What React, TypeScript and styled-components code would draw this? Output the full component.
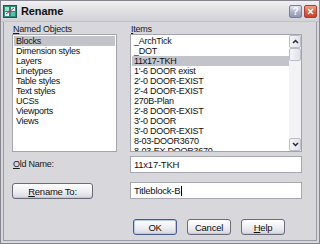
import React from 'react';
import styled, { createGlobalStyle } from 'styled-components';

const GlobalStyle = createGlobalStyle`
  html, body { margin: 0; padding: 0; background: #d8d7dc; }
  body { font-family: 'Liberation Sans', Arial, sans-serif; color: #000; }
`;

const Window = styled.div`
  width: 320px;
  height: 244px;
  box-sizing: border-box;
  border: 1px solid #85858f;
  background: #d8d7dc;
  display: flex;
  flex-direction: column;
  overflow: hidden;
`;

const TitleBar = styled.div`
  height: 20px;
  flex: none;
  display: flex;
  align-items: center;
  padding: 0 2px 0 2px;
  background: linear-gradient(#f0f0f3, #dcdce1 60%, #d2d2d8);
  border-bottom: 1px solid #c2c2ca;
`;

const Title = styled.span`
  flex: 1;
  margin-left: 4px;
  font-size: 11px;
  font-weight: bold;
  letter-spacing: -0.1px;
  color: #101010;
`;

const CaptionButton = styled.div<{ $kind: 'help' | 'close' }>`
  width: 13px;
  height: 13px;
  margin-left: 2px;
  border-radius: 2px;
  box-sizing: border-box;
  display: flex;
  align-items: center;
  justify-content: center;
  border: 1px solid ${(p) => (p.$kind === 'close' ? '#a8413a' : '#7b7f98')};
  background: ${(p) =>
    p.$kind === 'close'
      ? 'linear-gradient(#f0a08c, #dc5a40 55%, #c8402c)'
      : 'linear-gradient(#e2e4f0, #a9adc4 60%, #9196b2)'};
  color: #fff;
  font-size: 10px;
  font-weight: bold;
`;

const Client = styled.div`
  flex: 1;
  margin: 0 2px 2px;
  border: 1px solid #9b9ba7;
  border-top: none;
  padding: 0 13px 0 8px;
  display: grid;
  grid-template-columns: 105px 172px;
  grid-template-rows: 12px 118px 20px 26px 1fr;
  column-gap: 13px;
  font-size: 9px;
  letter-spacing: -0.25px;
`;

const Label = styled.div<{ $align?: string }>`
  display: flex;
  align-items: ${(p) => p.$align || 'flex-end'};
  padding-left: 1px;
  line-height: 10px;
  color: #1a1a1a;
`;

const ListBox = styled.div`
  position: relative;
  box-sizing: border-box;
  border: 1px solid #a4a4ae;
  background: #fff;
  padding: 1px 1px;
  overflow: hidden;
  display: flex;
`;

const Rows = styled.div`
  flex: 1;
  min-width: 0;
`;

const Row = styled.div<{ $selected?: boolean }>`
  height: 10px;
  line-height: 10px;
  padding-left: 2px;
  white-space: nowrap;
  background: ${(p) => (p.$selected ? '#c3c3cb' : 'transparent')};
  color: #111;
`;

const ScrollBar = styled.div`
  width: 12px;
  flex: none;
  margin: -1px -1px -1px 0;
  background: #f3f3f5;
  display: flex;
  flex-direction: column;
  justify-content: space-between;
`;

const ScrollTop = styled.div`
  display: flex;
  flex-direction: column;
`;

const ScrollPart = styled.div<{ $h: number }>`
  height: ${(p) => p.$h}px;
  box-sizing: border-box;
  border: 1px solid #bdbdc8;
  border-radius: 2px;
  background: linear-gradient(90deg, #f4f4f8, #e2e2ea);
  display: flex;
  align-items: center;
  justify-content: center;
`;

const Field = styled.div`
  box-sizing: border-box;
  height: 17px;
  border: 1px solid #a7a7b2;
  background: #fff;
  padding-left: 3px;
  display: flex;
  align-items: center;
  font-size: 9.5px;
  color: #111;
`;

const Caret = styled.span`
  display: inline-block;
  width: 1px;
  height: 10px;
  background: #000;
  margin-left: 1px;
`;

const Button = styled.div<{ $default?: boolean; $w?: number }>`
  box-sizing: border-box;
  width: ${(p) => p.$w || 44}px;
  height: 16px;
  border: 1px solid ${(p) => (p.$default ? '#4a5a8c' : '#6b6b7a')};
  border-radius: 3px;
  background: linear-gradient(#ffffff, #eeeef2 55%, #d6d6de);
  box-shadow: ${(p) => (p.$default ? 'inset 0 0 0 1px #b8c8ec' : 'inset 0 -1px 0 #c6c6d0')};
  display: flex;
  align-items: center;
  justify-content: center;
  font-size: 9.5px;
  color: #111;
`;

const FieldCell = styled.div<{ $top: number }>`
  padding-top: ${(p) => p.$top}px;
`;

const ButtonBar = styled.div`
  grid-column: 1 / span 2;
  display: flex;
  justify-content: flex-end;
  gap: 10px;
  padding: 21px 17px 0 0;
`;

function Arrow ({ up }: { up?: boolean }) {
  return (
    <svg width='7' height='5' viewBox='0 0 7 5'>
      <path d={up ? 'M1 4 L3.5 1.5 L6 4' : 'M1 1 L3.5 3.5 L6 1'} stroke='#2a2a3a' strokeWidth='1.5' fill='none' />
    </svg>
  );
}

function AppIcon () {
  return (
    <svg width='14' height='13' viewBox='0 0 14 13'>
      <rect x='0.5' y='0.5' width='13' height='12' fill='#2f8a7c' stroke='#1b5c54' />
      <rect x='2' y='2' width='4' height='4' fill='#9fe0c8' />
      <rect x='8' y='2' width='4' height='4' fill='#e6f4ff' />
      <rect x='2' y='7' width='4' height='4' fill='#d8f0ff' />
      <rect x='8' y='7' width='4' height='4' fill='#5cc0a8' />
      <path d='M3 9 L11 3' stroke='#c03030' strokeWidth='1' />
    </svg>
  );
}

const named = ['Blocks', 'Dimension styles', 'Layers', 'Linetypes', 'Table styles', 'Text styles', 'UCSs', 'Viewports', 'Views'];

const items = [
  '_ArchTick',
  '_DOT',
  '11x17-TKH',
  "1'-6 DOOR exist",
  "2'-0 DOOR-EXIST",
  "2'-4 DOOR-EXIST",
  '270B-Plan',
  "2'-8 DOOR-EXIST",
  "3'-0 DOOR",
  "3'-0 DOOR-EXIST",
  '8-03-DOOR3670',
  '8-03-EX DOOR3670'
];

export default function App () {
  return (
    <>
      <GlobalStyle />
      <Window>
        <TitleBar>
          <AppIcon />
          <Title>Rename</Title>
          <CaptionButton $kind='help'>?</CaptionButton>
          <CaptionButton $kind='close'>
            <svg width='7' height='7' viewBox='0 0 7 7'>
              <path d='M1 1 L6 6 M6 1 L1 6' stroke='#fff' strokeWidth='1.6' />
            </svg>
          </CaptionButton>
        </TitleBar>
        <Client>
          <Label><span><u>N</u>amed Objects</span></Label>
          <Label><span><u>I</u>tems</span></Label>
          <ListBox>
            <Rows>
              {named.map((n, i) => (
                <Row key={n} $selected={i === 0}>{n}</Row>
              ))}
            </Rows>
          </ListBox>
          <ListBox>
            <Rows>
              {items.map((n) => (
                <Row key={n} $selected={n === '11x17-TKH'}>{n}</Row>
              ))}
            </Rows>
            <ScrollBar>
              <ScrollTop>
                <ScrollPart $h={13}><Arrow up /></ScrollPart>
                <ScrollPart $h={13} />
              </ScrollTop>
              <ScrollPart $h={13}><Arrow /></ScrollPart>
            </ScrollBar>
          </ListBox>
          <Label $align='center' style={{ paddingTop: 4 }}><span><u>O</u>ld Name:</span></Label>
          <FieldCell $top={4}><Field>11x17-TKH</Field></FieldCell>
          <FieldCell $top={11}><Button $w={81}><span><u>R</u>ename To:</span></Button></FieldCell>
          <FieldCell $top={10}><Field>Titleblock-B<Caret /></Field></FieldCell>
          <ButtonBar>
            <Button $default>OK</Button>
            <Button>Cancel</Button>
            <Button><span><u>H</u>elp</span></Button>
          </ButtonBar>
        </Client>
      </Window>
    </>
  );
}
